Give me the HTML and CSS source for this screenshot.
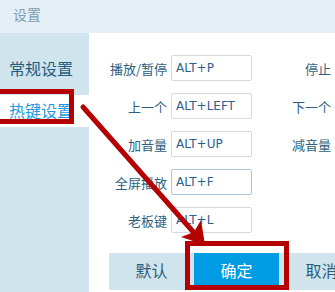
FILE: index.html
```html
<!DOCTYPE html>
<html lang="zh">
<head>
    <meta charset="UTF-8">
    <meta name="viewport" content="width=device-width, initial-scale=1.0">
    <title>设置</title>
    <link rel="stylesheet" href="styles.css">
</head>
<body>
    <div id="window">
        <div class="title-bar">设置</div>

        <div class="body">
            <!-- 左侧菜单 -->
            <div class="side-menu">
                <div class="menu-item">常规设置</div>
                <div class="menu-item active">热键设置</div>
            </div>

            <!-- 热键列表 -->
            <div class="content">
                <div class="hotkeys">
                    <div class="hk-row">
                        <span class="hk-label">播放/暂停</span>
                        <div class="hk-input">ALT+P</div>
                        <span class="hk-label">停止</span>
                    </div>
                    <div class="hk-row">
                        <span class="hk-label">上一个</span>
                        <div class="hk-input">ALT+LEFT</div>
                        <span class="hk-label">下一个</span>
                    </div>
                    <div class="hk-row">
                        <span class="hk-label">加音量</span>
                        <div class="hk-input">ALT+UP</div>
                        <span class="hk-label">减音量</span>
                    </div>
                    <div class="hk-row">
                        <span class="hk-label">全屏播放</span>
                        <div class="hk-input focus">ALT+F</div>
                    </div>
                    <div class="hk-row">
                        <span class="hk-label">老板键</span>
                        <div class="hk-input">ALT+L</div>
                    </div>
                </div>

                <div class="btn-bar">
                    <div class="btn">默认</div>
                    <div class="btn primary">确定</div>
                    <div class="btn">取消</div>
                </div>
            </div>
        </div>

        <!-- 标注 -->
        <div class="mark mark-menu"></div>
        <div class="mark mark-ok"></div>
        <svg class="arrow" width="335" height="292" viewBox="0 0 335 292">
            <line x1="83" y1="107" x2="196" y2="235" stroke="#b40000" stroke-width="5" stroke-linecap="round"/>
            <polygon points="205,245 181,237 194,232 201,220" fill="#b40000"/>
        </svg>
    </div>
</body>
</html>
```

FILE: styles.css
```css
body {
    margin: 0;
    font-family: "Noto Sans CJK SC", "Liberation Sans", sans-serif;
    background: #ffffff;
    overflow: hidden;
}
#window {
    position: relative;
    width: 335px;
    height: 292px;
    overflow: hidden;
}
.title-bar {
    height: 33px;
    line-height: 28px;
    padding-left: 13px;
    font-size: 14px;
    color: #7d9db3;
    background: #e7eff6;
}
.body {
    display: flex;
    height: 259px;
}
.side-menu {
    width: 89px;
    flex-shrink: 0;
    background: #cfe4ec;
}
.menu-item {
    height: 62px;
    line-height: 70px;
    padding-left: 9px;
    font-size: 16px;
    color: #1f5d7e;
}
.menu-item.active {
    height: 32px;
    line-height: 30px;
    background: #ffffff;
    color: #1a9ae0;
}
.content {
    flex: 1;
    display: flex;
    flex-direction: column;
    overflow: hidden;
}
.hotkeys {
    display: flex;
    flex-direction: column;
    gap: 12px;
    padding-top: 22px;
    height: 198px;
}
.hk-row {
    display: flex;
    align-items: center;
    height: 26px;
}
.hk-label {
    width: 78px;
    flex-shrink: 0;
    text-align: right;
    font-size: 13px;
    color: #2e5f80;
    white-space: nowrap;
}
.hk-input {
    width: 75px;
    height: 24px;
    flex-shrink: 0;
    margin-left: 4px;
    padding-left: 4px;
    line-height: 24px;
    border: 1px solid #d3dbe1;
    border-radius: 2px;
    font-family: "DejaVu Sans", sans-serif;
    font-size: 12px;
    color: #2c5f8c;
}
.hk-input.focus {
    border-color: #a9c9de;
}
.hk-row .hk-input + .hk-label {
    width: 79px;
}
.btn-bar {
    display: flex;
    margin-left: 20px;
    height: 37px;
    background: #cfe4ec;
}
.btn {
    width: 85px;
    flex-shrink: 0;
    text-align: center;
    line-height: 35px;
    font-size: 16px;
    color: #2b5e7e;
}
.btn.primary {
    background: #009ce3;
    color: #ffffff;
    height: 34px;
}
.mark {
    position: absolute;
    border: 5px solid #b40000;
}
.mark-menu {
    left: -5px;
    top: 89px;
    width: 69px;
    height: 25px;
}
.mark-ok {
    left: 185px;
    top: 241px;
    width: 94px;
    height: 39px;
}
.arrow {
    position: absolute;
    left: 0;
    top: 0;
}
```
